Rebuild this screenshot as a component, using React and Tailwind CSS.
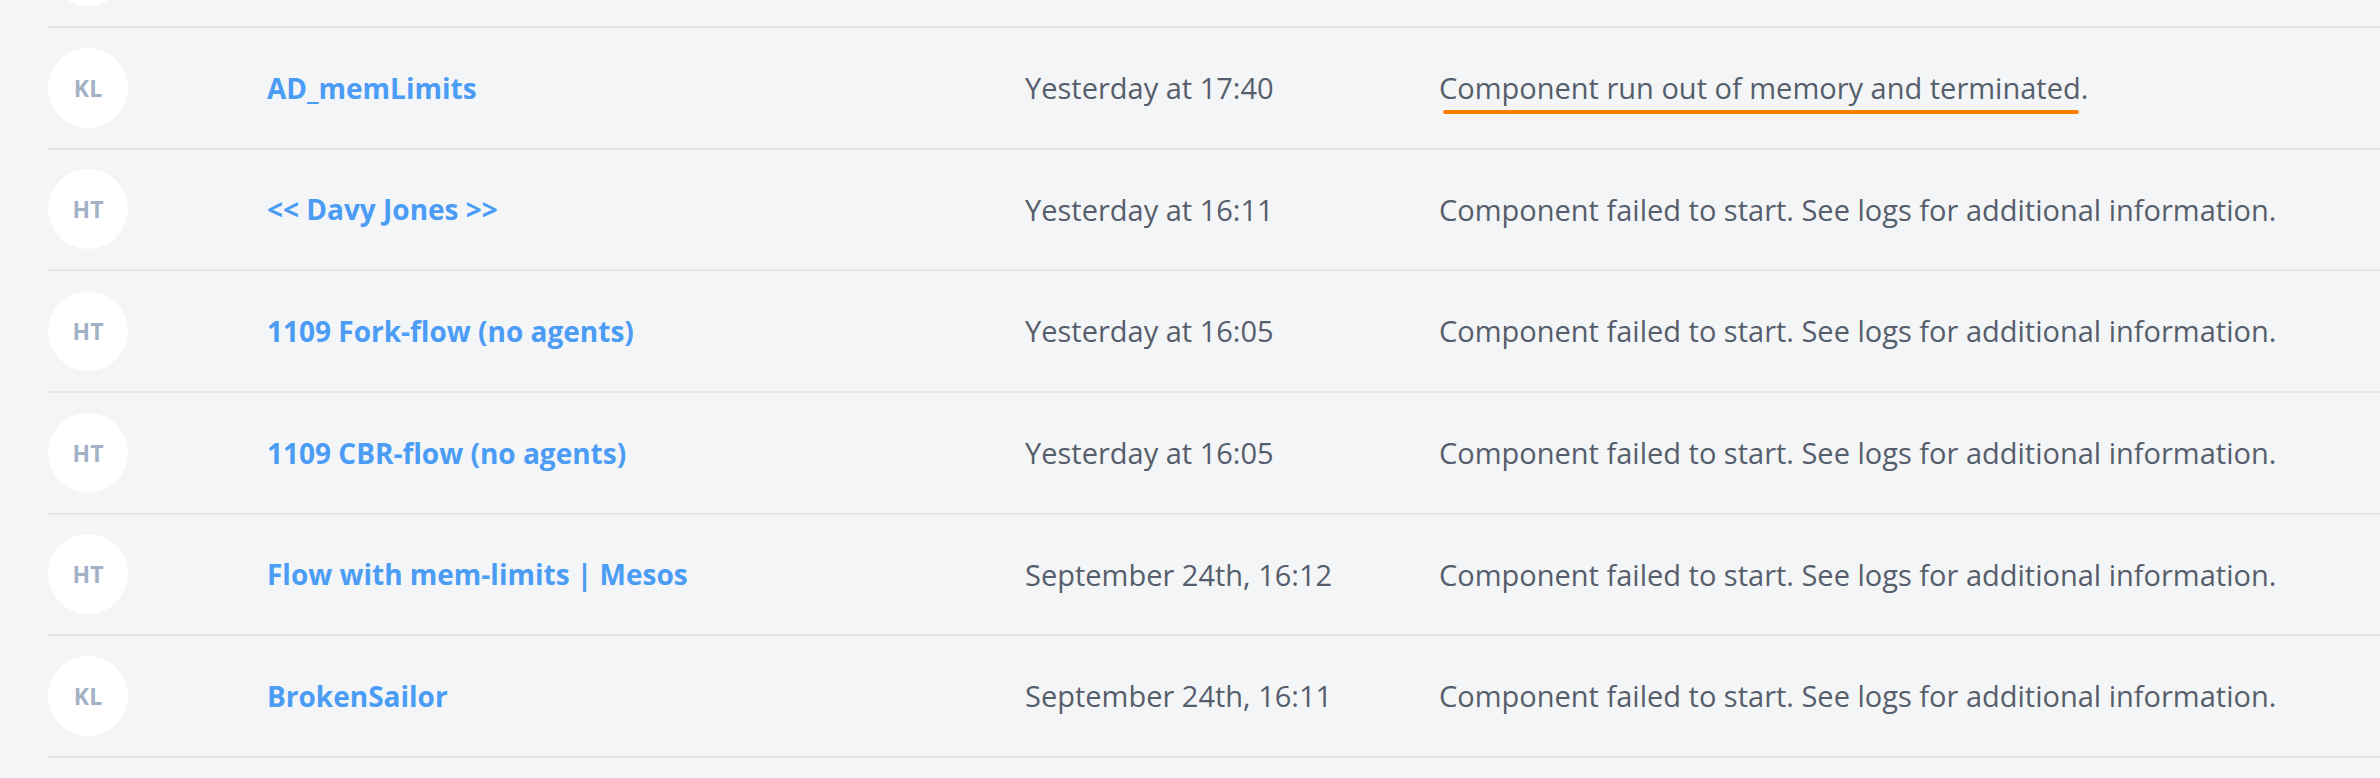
import React from "react";

const rows = [
  { initials: "", name: "", date: "", msg: "" },
  { initials: "KL", name: "AD_memLimits", date: "Yesterday at 17:40", msg: "Component run out of memory and terminated.", mark: true },
  { initials: "HT", name: "<< Davy Jones >>", date: "Yesterday at 16:11", msg: "Component failed to start. See logs for additional information." },
  { initials: "HT", name: "1109 Fork-flow (no agents)", date: "Yesterday at 16:05", msg: "Component failed to start. See logs for additional information." },
  { initials: "HT", name: "1109 CBR-flow (no agents)", date: "Yesterday at 16:05", msg: "Component failed to start. See logs for additional information." },
  { initials: "HT", name: "Flow with mem-limits | Mesos", date: "September 24th, 16:12", msg: "Component failed to start. See logs for additional information." },
  { initials: "KL", name: "BrokenSailor", date: "September 24th, 16:11", msg: "Component failed to start. See logs for additional information." },
  { initials: "", name: "", date: "", msg: "" },
];

export default function App() {
  return (
    <div
      className="w-[2380px] h-[778px] overflow-hidden bg-[#f4f5f7]"
      style={{ fontFamily: '"Open Sans", "Noto Sans", sans-serif' }}
    >
      <div className="mt-[-93.67px] ml-[48px]">
        {rows.map((r, i) => (
          <div
            key={i}
            className="h-[121.67px] border-b-2 border-[#e4e5e8] grid grid-cols-[219px_758px_414px_1fr] items-center"
          >
            <div className="w-[80px] h-[80px] rounded-full bg-white flex items-center justify-center text-[23px] font-bold text-[#a3b1c6]">
              {r.initials}
            </div>
            <div className="text-[28px] font-bold text-[#4a9cf5] whitespace-nowrap">{r.name}</div>
            <div className="text-[29px] text-[#565e6c] whitespace-nowrap">{r.date}</div>
            <div className="text-[29px] text-[#565e6c] whitespace-nowrap">
              {r.mark ? (
                <span className="relative inline-block">
                  {r.msg}
                  <span className="absolute left-[4px] right-[9px] bottom-[-4px] h-[4px] rounded-full bg-[#ff8000]"></span>
                </span>
              ) : (
                r.msg
              )}
            </div>
          </div>
        ))}
      </div>
    </div>
  );
}
